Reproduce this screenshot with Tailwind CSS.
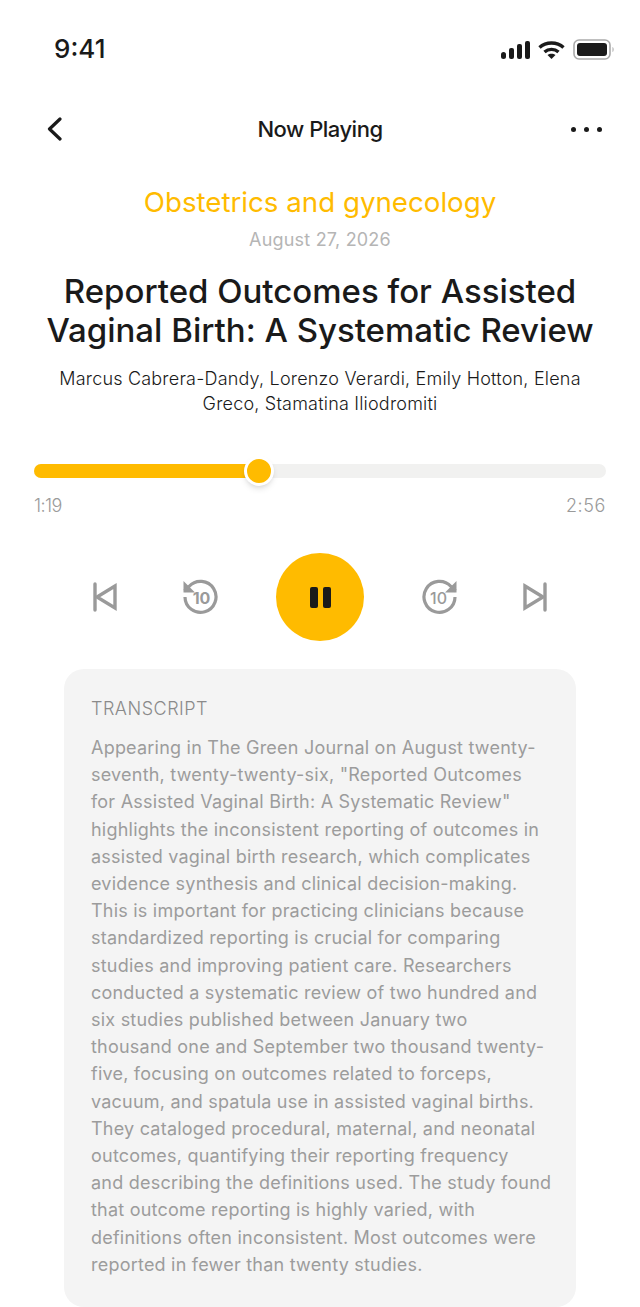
<!DOCTYPE html>
<html lang="en">
<head>
  <meta charset="UTF-8" />
  <meta name="viewport" content="width=device-width, initial-scale=1.0" />
  <title>Now Playing</title>
  <script src="https://cdn.jsdelivr.net/npm/@tailwindcss/browser@4"></script>
</head>
<body class="bg-white font-['Inter',sans-serif] text-[#1a1a1a]">
  <div class="w-[640px] h-[1307px] overflow-hidden flex flex-col">
    <!-- status bar -->
    <div class="h-[98px] shrink-0 flex items-start justify-between pl-[54px] pr-[25px] pt-[34px]">
      <span class="text-[26px] leading-[30px] font-medium">9:41</span>
      <div class="flex items-center gap-[8px] mt-[5px]">
        <svg width="29" height="20" viewBox="0 0 29 20" fill="#1a1a1a">
          <rect x="0" y="12" width="5" height="7" rx="2.5"/><rect x="8" y="8" width="5" height="11" rx="2"/><rect x="16" y="4" width="5" height="15" rx="2"/><rect x="24" y="1" width="5" height="18" rx="2"/>
        </svg>
        <svg width="27" height="20" viewBox="0 0 27 20" fill="none" stroke="#1a1a1a" stroke-width="3.4">
          <path d="M1.500 7.500C8 1.500 19 1.500 25.500 7.500"/><path d="M6.500 12C10.500 8.500 16.500 8.500 20.500 12"/><path d="M13.500 19l-4-4c2.200-1.800 5.800-1.800 8 0z" fill="#1a1a1a" stroke="none"/>
        </svg>
        <svg width="42" height="21" viewBox="0 0 42 21" fill="none">
          <rect x="1" y="1" width="36" height="19" rx="5" stroke="#aaa" stroke-width="1.600"/>
          <rect x="4" y="4" width="30" height="13" rx="3" fill="#1a1a1a"/>
          <path d="M39.500 8c1.500.5 1.500 4.500 0 5z" fill="#aaa"/>
        </svg>
      </div>
    </div>

    <!-- nav -->
    <div class="h-[60px] shrink-0 grid grid-cols-3 items-center px-[38px] pt-[1px]">
      <svg class="ml-[9px]" width="16" height="24" viewBox="0 0 16 24" fill="none" stroke="#1a1a1a" stroke-width="3.2" stroke-linecap="round" stroke-linejoin="round"><path d="M13 2 2.500 12 13 22"/></svg>
      <span class="text-[22px] leading-[28px] font-medium tracking-[-0.5px] text-center whitespace-nowrap">Now Playing</span>
      <div class="flex gap-[8px] justify-end mt-[1px]">
        <span class="w-[5px] h-[5px] rounded-full bg-[#1a1a1a]"></span><span class="w-[5px] h-[5px] rounded-full bg-[#1a1a1a]"></span><span class="w-[5px] h-[5px] rounded-full bg-[#1a1a1a]"></span>
      </div>
    </div>

    <!-- article header -->
    <div class="flex flex-col items-center text-center">
      <div class="mt-[26px] text-[27.7px] leading-[36px] text-[#ffbb00]">Obstetrics and gynecology</div>
      <div class="mt-[8px] text-[18px] leading-[24px] tracking-[0.2px] text-[#b5b5b5]">August 27, 2026</div>
      <h1 class="mt-[20px] text-[33px] leading-[39px] font-medium">Reported Outcomes for Assisted<br>Vaginal Birth: A Systematic Review</h1>
      <p class="mt-[16px] text-[18px] leading-[25px] tracking-[0.2px] font-light">Marcus Cabrera-Dandy, Lorenzo Verardi, Emily Hotton, Elena<br>Greco, Stamatina Iliodromiti</p>
    </div>

    <!-- progress -->
    <div class="mt-[48px] mx-[34px]">
      <div class="relative h-[14px] rounded-full bg-[#f1f1f0]">
        <div class="h-full w-[226px] rounded-full bg-[#ffbb00]"></div>
        <div class="absolute left-[210px] top-[-8px] w-[30px] h-[30px] rounded-full bg-[#ffbb00] border-[3px] border-white shadow-md"></div>
      </div>
      <div class="mt-[16px] flex justify-between text-[18px] leading-[24px] font-light text-[#9a9a9a]">
        <span class="tracking-[-0.6px]">1:19</span><span class="tracking-[0.6px]">2:56</span>
      </div>
    </div>

    <!-- controls -->
    <div class="mt-[35px] flex items-center justify-center">
      <svg class="mr-[63px]" width="26" height="30" viewBox="0 0 26 30" fill="none" stroke="#9a9a9a" stroke-width="3.400"><path d="M3 2v26" stroke-linecap="round"/><path d="M23 4 5 15l18 11z"/></svg>
      <svg class="mr-[57px]" width="38" height="38" viewBox="0 0 38 38" fill="none" stroke="#9a9a9a"><path d="M4 19A15.500 15.500 0 1 0 8 8.500L3.500 13" stroke-width="3.200"/><path d="M2.500 3v11.500H14z" fill="#9a9a9a" stroke="none"/><text x="20.500" y="26" text-anchor="middle" font-family="Inter" font-size="16" font-weight="700" fill="#9a9a9a" stroke="none">10</text></svg>
      <div class="w-[88px] h-[88px] rounded-full bg-[#ffbb00] flex items-center justify-center gap-[5px]">
        <span class="w-[8px] h-[21px] rounded-[2px] bg-[#1a1a1a]"></span><span class="w-[8px] h-[21px] rounded-[2px] bg-[#1a1a1a]"></span>
      </div>
      <svg class="ml-[57px]" width="38" height="38" viewBox="0 0 38 38" fill="none" stroke="#9a9a9a"><path d="M34 19A15.500 15.500 0 1 1 30 8.500L34.500 13" stroke-width="3.200"/><path d="M35.500 3v11.500H24z" fill="#9a9a9a" stroke="none"/><text x="17.500" y="26" text-anchor="middle" font-family="Inter" font-size="16" font-weight="500" fill="#9a9a9a" stroke="none">10</text></svg>
      <svg class="ml-[63px]" width="26" height="30" viewBox="0 0 26 30" fill="none" stroke="#9a9a9a" stroke-width="3.400"><path d="M23 2v26" stroke-linecap="round"/><path d="M3 4l18 11L3 26z"/></svg>
    </div>

    <!-- transcript -->
    <div class="mt-[28px] mx-[64px] rounded-[20px] bg-[#f4f4f4] pl-[27px] pr-[20px] pt-[27px] pb-[29px] text-[#9c9c9c]">
      <div class="text-[18px] leading-[26px] tracking-[0.5px] font-light text-[#8a8a8a]">TRANSCRIPT</div>
      <p class="mt-[12px] text-[18px] leading-[27.2px] tracking-[0.22px] whitespace-nowrap">Appearing in The Green Journal on August twenty-<br>seventh, twenty-twenty-six, "Reported Outcomes<br>for Assisted Vaginal Birth: A Systematic Review"<br>highlights the inconsistent reporting of outcomes in<br>assisted vaginal birth research, which complicates<br>evidence synthesis and clinical decision-making.<br>This is important for practicing clinicians because<br>standardized reporting is crucial for comparing<br>studies and improving patient care. Researchers<br>conducted a systematic review of two hundred and<br>six studies published between January two<br>thousand one and September two thousand twenty-<br>five, focusing on outcomes related to forceps,<br>vacuum, and spatula use in assisted vaginal births.<br>They cataloged procedural, maternal, and neonatal<br>outcomes, quantifying their reporting frequency<br>and describing the definitions used. The study found<br>that outcome reporting is highly varied, with<br>definitions often inconsistent. Most outcomes were<br>reported in fewer than twenty studies.</p>
    </div>
  </div>
</body>
</html>
